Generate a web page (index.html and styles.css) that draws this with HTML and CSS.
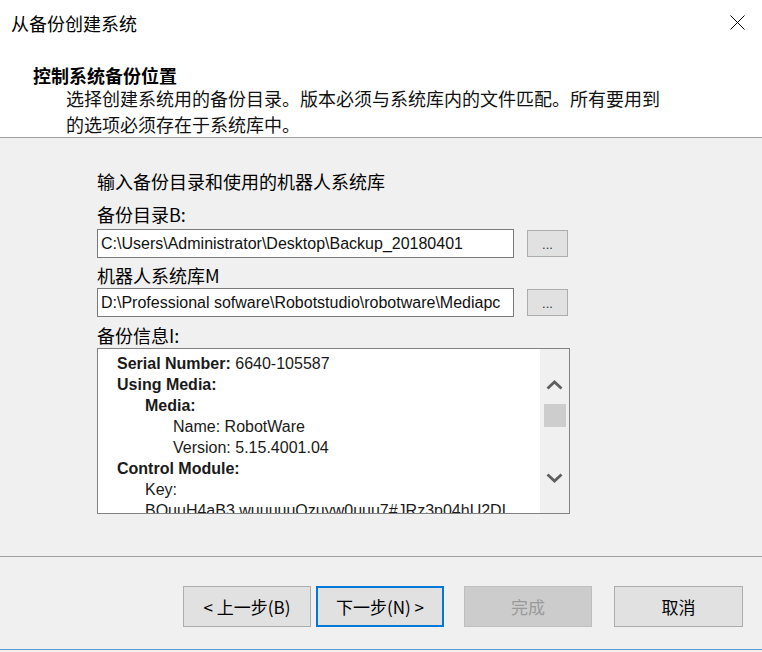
FILE: index.html
```html
<!DOCTYPE html>
<html lang="zh-CN">
<head>
<meta charset="utf-8">
<title>从备份创建系统</title>
<link rel="stylesheet" href="styles.css">
</head>
<body>
<div class="window">
  <div class="titlebar">
    <span class="title">从备份创建系统</span>
    <svg class="close" viewBox="0 0 15 15" width="15" height="15"><path d="M0.5 0.5L14.5 14.5M14.5 0.5L0.5 14.5" stroke="#000" stroke-width="1" fill="none"/></svg>
  </div>
  <div class="header">
    <div class="h-title">控制系统备份位置</div>
    <div class="h-desc">选择创建系统用的备份目录。版本必须与系统库内的文件匹配。所有要用到<br>的选项必须存在于系统库中。</div>
  </div>
  <div class="content">
    <div class="intro">输入备份目录和使用的机器人系统库</div>
    <div class="label lb1">备份目录B:</div>
    <div class="field-row">
      <div class="field">C:\Users\Administrator\Desktop\Backup_20180401</div>
      <div class="browse">...</div>
    </div>
    <div class="label lb2">机器人系统库M</div>
    <div class="field-row">
      <div class="field">D:\Professional sofware\Robotstudio\robotware\Mediapc</div>
      <div class="browse">...</div>
    </div>
    <div class="label lb3">备份信息I:</div>
    <div class="info">
      <div class="info-text">
        <div><b>Serial Number:</b> 6640-105587</div>
        <div><b>Using Media:</b></div>
        <div class="i1"><b>Media:</b></div>
        <div class="i2">Name: RobotWare</div>
        <div class="i2">Version: 5.15.4001.04</div>
        <div><b>Control Module:</b></div>
        <div class="i1">Key:</div>
        <div class="i1">BQuuH4aB3 wuuuuuQzuyw0uuu7#JRz3p04hU2DL</div>
      </div>
      <div class="scrollbar">
        <svg class="chev chev-up" viewBox="0 0 17 10" width="17" height="10"><polyline points="1.5,8.5 8.5,2 15.5,8.5" fill="none" stroke="#5f5f5f" stroke-width="2.8"/></svg>
        <div class="thumb"></div>
        <svg class="chev chev-down" viewBox="0 0 17 10" width="17" height="10"><polyline points="1.5,1.5 8.5,8 15.5,1.5" fill="none" stroke="#5f5f5f" stroke-width="2.8"/></svg>
      </div>
    </div>
  </div>
  <div class="footer">
    <div class="btn">&lt; 上一步(B)</div>
    <div class="btn btn-default">下一步(N) &gt;</div>
    <div class="btn btn-disabled">完成</div>
    <div class="btn btn-cancel">取消</div>
  </div>
</div>
</body>
</html>
```
FILE: styles.css
```css
* { box-sizing: border-box; }
html, body { margin: 0; padding: 0; }
body {
  width: 762px;
  height: 652px;
  overflow: hidden;
  background: #f0f0f0;
  color: #000;
  font-family: "Noto Sans CJK SC", "Noto Sans", sans-serif;
}
.window { display: flex; flex-direction: column; }
.titlebar {
  height: 44px;
  background: #fff;
  display: flex;
  align-items: center;
  padding: 0 17px 0 11px;
}
.title { font-size: 18px; line-height: 24px; margin-top: 2px; }
.close { margin-left: auto; display: block; }
.header {
  height: 94px;
  background: #fff;
  padding: 21px 0 0 33px;
  border-bottom: 1px solid #a0a0a0;
}
.h-title { font-size: 18px; font-weight: bold; line-height: 20px; }
.h-desc { font-size: 18px; line-height: 26px; padding-left: 33px; color: #111; }
.content {
  padding: 30px 0 42px 97px;
  border-bottom: 1px solid #a0a0a0;
}
.intro { font-size: 18px; line-height: 26px; margin-bottom: 8px; }
.label { font-size: 18px; line-height: 25px; }
.lb1 { margin-bottom: 2px; }
.lb2 { padding-top: 5px; }
.lb3 { padding-top: 5px; line-height: 26px; }
.field-row { display: flex; align-items: center; }
.field {
  width: 417px;
  height: 29px;
  background: #fff;
  border: 1px solid #7a7a7a;
  font-family: "Liberation Sans", Arial, sans-serif;
  font-size: 16px;
  line-height: 27px;
  padding-left: 3px;
  white-space: nowrap;
  overflow: hidden;
  color: #111;
}
.browse {
  width: 41px;
  height: 27px;
  margin-left: 13px;
  background: #e1e1e1;
  border: 1px solid #adadad;
  font-family: "Liberation Sans", Arial, sans-serif;
  font-size: 13px;
  line-height: 27px;
  text-align: center;
  color: #333;
}
.info {
  width: 473px;
  height: 166px;
  background: #fff;
  border: 1px solid #828282;
  display: flex;
}
.info-text {
  flex: 1;
  padding: 4px 0 0 19px;
  font-family: "Liberation Sans", Arial, sans-serif;
  font-size: 16px;
  line-height: 21px;
  color: #1a1a1a;
  white-space: nowrap;
  overflow: hidden;
}
.info-text b { font-weight: bold; }
.i1 { padding-left: 28px; }
.i2 { padding-left: 56px; }
.scrollbar {
  width: 29px;
  background: #f0f0f0;
  display: flex;
  flex-direction: column;
  align-items: center;
}
.chev { display: block; }
.chev-up { margin-top: 31px; }
.thumb { width: 22px; height: 23px; background: #cdcdcd; margin-top: 14px; }
.chev-down { margin-top: auto; margin-bottom: 30px; }
.footer {
  height: 93px;
  display: flex;
  align-items: flex-start;
  padding: 29px 0 0 183px;
  border-bottom: 1px solid #5b9bd5;
}
.btn {
  width: 128px;
  height: 41px;
  background: #e1e1e1;
  border: 1px solid #adadad;
  font-size: 17px;
  line-height: 39px;
  text-align: center;
  color: #000;
}
.btn-default { margin-left: 5px; border: 2px solid #0078d7; line-height: 37px; }
.btn-disabled { margin-left: 20px; background: #cccccc; border-color: #bfbfbf; color: #9a9a9a; }
.btn-cancel { margin-left: 22px; width: 129px; }
```
